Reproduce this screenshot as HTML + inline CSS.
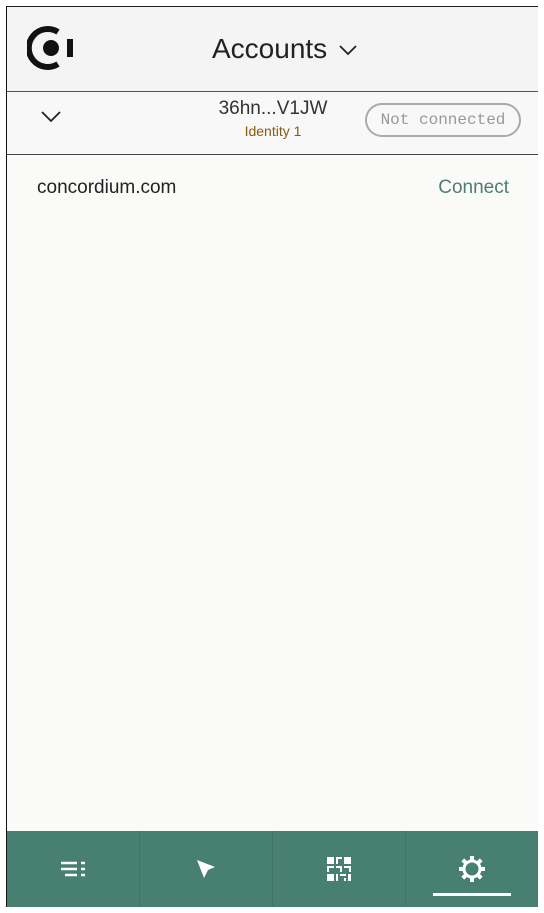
<!DOCTYPE html>
<html><head><style>
body{margin:0;width:544px;height:913px;background:#fff;position:relative;overflow:hidden;font-family:"Liberation Sans",sans-serif;}
.frame{position:absolute;left:6px;top:6px;width:532px;height:901px;background:#fafaf8;border-left:1px solid #111;border-top:1px solid #222;box-sizing:border-box;}
.hdr{position:absolute;left:0;top:0;width:100%;height:84px;background:#f3f4f3;border-bottom:1px solid #3d5a78;}
.acc{position:absolute;left:0;top:85px;width:100%;height:62px;background:#f7f8f7;border-bottom:1px solid #444;}
.nav{position:absolute;left:0;bottom:0;width:100%;height:76px;background:#477f71;display:flex;}
.nav div{flex:1;border-right:1px solid #3f7466;position:relative;display:flex;align-items:center;justify-content:center;}
.nav div:last-child{border-right:none}
</style></head><body>
<div class="frame">
 <div class="hdr">
  <svg style="position:absolute;left:20px;top:17px" width="50" height="48" viewBox="0 0 50 48">
   <path d="M31 8 A19 19 0 1 0 31 40" fill="none" stroke="#111" stroke-width="6"/>
   <circle cx="24" cy="24" r="8" fill="#111"/>
   <rect x="40" y="15" width="6" height="18" fill="#111"/>
  </svg>
  <div style="position:absolute;left:205px;top:26px;font-size:28px;color:#222;">Accounts</div>
  <svg style="position:absolute;left:331px;top:36px" width="20" height="14"><path d="M2 3 L10 11 L18 3" fill="none" stroke="#222" stroke-width="1.8"/></svg>
 </div>
 <div class="acc">
  <svg style="position:absolute;left:33px;top:17px" width="22" height="14"><path d="M2 3 L11 12 L20 3" fill="none" stroke="#222" stroke-width="1.8"/></svg>
  <div style="position:absolute;left:160px;width:212px;text-align:center;top:6px;font-size:19px;color:#333;">36hn...V1JW</div>
  <div style="position:absolute;left:160px;width:212px;text-align:center;top:31px;font-size:14px;color:#8a5a10;">Identity 1</div>
  <div style="position:absolute;left:358px;top:11px;width:156px;height:34px;border:2px solid #aaa;border-radius:17px;box-sizing:border-box;font-family:'Liberation Mono',monospace;font-size:16px;color:#999;text-align:center;line-height:30px;">Not connected</div>
 </div>
 <div style="position:absolute;left:30px;top:170px;font-size:19px;color:#222;">concordium.com</div>
 <div style="position:absolute;right:29px;top:170px;font-size:19px;color:#517d70;">Connect</div>
 <div class="nav">
  <div><svg width="28" height="20"><g stroke="#fff" stroke-width="2.5"><path d="M2 4h16M22 4h4M2 10h16M22 10h4M6 16h12M22 16h4"/></g></svg></div>
  <div><svg width="24" height="24"><path d="M3 3 L21 10 L14 13 L10 21 Z" fill="#fff"/></svg></div>
  <div><svg width="26" height="26" viewBox="0 0 26 26" fill="#fff"><rect x="1" y="1" width="7" height="7"/><rect x="18" y="1" width="7" height="7"/><rect x="1" y="18" width="7" height="7"/><path d="M10 1h6v2h-4v5h-2zM1 10h7v2H3v4H1zM10 10h6v6h-2v-4h-4zM18 10h7v6h-2v-4h-5zM10 18h2v7h-2zM14 18h6v2h-6zM18 22h2v3h-2zM22 18h3v7h-3z"/></svg></div>
  <div><svg width="28" height="28" viewBox="0 0 28 28"><circle cx="14" cy="14" r="8" fill="none" stroke="#fff" stroke-width="3"/><g stroke="#fff" stroke-width="4"><path d="M14 1v5M14 22v5M1 14h5M22 14h5M4.8 4.8l3.5 3.5M19.7 19.7l3.5 3.5M4.8 23.2l3.5-3.5M19.7 8.3l3.5-3.5"/></g></svg>
   <span style="position:absolute;left:27px;right:27px;bottom:11px;height:3px;background:#fff"></span></div>
 </div>
</div>
</body></html>
